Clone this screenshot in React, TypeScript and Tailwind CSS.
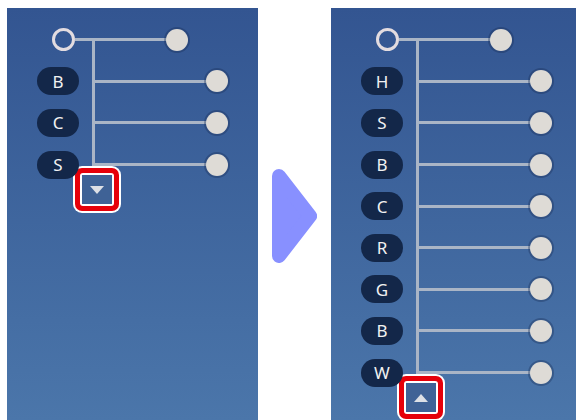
import { clsx } from 'clsx';

// Tree connector colour + sizes shared across both panels.
const LINE = 'bg-[#aab5c6]';

const Dot = () => (
  <span className="h-[22px] w-[22px] shrink-0 rounded-full bg-[#dedbd6] shadow-[0_0_0_2px_rgba(24,44,84,0.35)]" />
);

const RootRow = () => (
  <div className="flex h-[41.6px] items-center">
    <div className="flex w-[85px] items-center">
      <span className="ml-[45px] h-[23px] w-[23px] shrink-0 rounded-full border-[3px] border-[#e3dce0]" />
      <div className={clsx('h-[3px] flex-1', LINE)} />
    </div>
    <div className="flex h-full w-[3px] flex-col">
      <div className="flex-1" />
      <div className={clsx('h-[3px]', LINE)} />
      <div className={clsx('flex-1', LINE)} />
    </div>
    <div className={clsx('h-[3px] w-[71px]', LINE)} />
    <Dot />
  </div>
);

const ChannelRow = ({ label, isLast }: { label: string; isLast: boolean }) => (
  <div className="flex h-[41.6px] items-center">
    <div className="flex w-[85px] items-center">
      <span className="ml-[30px] flex h-[28px] w-[42px] items-center justify-center rounded-full bg-[#132749] text-[17px] leading-none text-[#f1f1f1]">
        {label}
      </span>
    </div>
    <div className="flex h-full w-[3px] flex-col">
      <div className={clsx('flex-1', LINE)} />
      <div className={clsx('h-[3px]', LINE)} />
      <div className={clsx('flex-1', !isLast && LINE)} />
    </div>
    <div className={clsx('h-[3px] w-[111px]', LINE)} />
    <Dot />
  </div>
);

// Red highlight frame round the expand / collapse toggle.
const ToggleButton = ({ direction }: { direction: 'down' | 'up' }) => (
  <div className="-mt-[19px] ml-[66px] w-fit rounded-[9px] bg-white p-[2px]">
    <div className="rounded-[7px] bg-[#e6000a] p-[5px]">
      <div className="rounded-[3px] bg-white p-[2px]">
        <div className="flex h-[29px] w-[30px] items-center justify-center bg-[#3f6296]">
          {direction === 'down' ? (
            <span className="h-0 w-0 border-x-[7px] border-t-[8px] border-x-transparent border-t-[#dde0e6]" />
          ) : (
            <span className="h-0 w-0 border-x-[7px] border-b-[8px] border-x-transparent border-b-[#dde0e6]" />
          )}
        </div>
      </div>
    </div>
  </div>
);

const Panel = ({
  labels,
  direction,
  className
}: {
  labels: string[];
  direction: 'down' | 'up';
  className?: string;
}) => (
  <div
    className={clsx(
      'h-[412px] shrink-0 overflow-hidden bg-gradient-to-b from-[#335591] to-[#4b76aa] pt-[11px]',
      className
    )}
  >
    <RootRow />
    {labels.map((label, i) => (
      <ChannelRow key={i} label={label} isLast={i === labels.length - 1} />
    ))}
    <ToggleButton direction={direction} />
  </div>
);

const NextArrow = () => (
  <svg width="45" height="94" viewBox="0 0 45 94" className="ml-[14px] mt-[161px] shrink-0">
    <polygon
      points="7,7 38,47 7,87"
      fill="#8890ff"
      stroke="#8890ff"
      strokeWidth="14"
      strokeLinejoin="round"
    />
  </svg>
);

export default function App() {
  return (
    <div className="flex h-[420px] w-[577px] overflow-hidden bg-white pt-[8px] font-['Noto_Sans',sans-serif]">
      <Panel className="ml-[7px] w-[251px]" labels={['B', 'C', 'S']} direction="down" />
      <NextArrow />
      <Panel
        className="ml-[14px] w-[245px]"
        labels={['H', 'S', 'B', 'C', 'R', 'G', 'B', 'W']}
        direction="up"
      />
    </div>
  );
}
